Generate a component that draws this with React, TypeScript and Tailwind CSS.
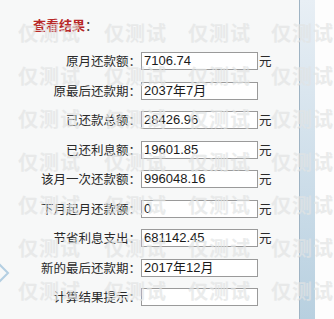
import React from "react";

const rows: { label: string; value: string; unit?: boolean }[] = [
  { label: "原月还款额：", value: "7106.74", unit: true },
  { label: "原最后还款期：", value: "2037年7月" },
  { label: "已还款总额：", value: "28426.96", unit: true },
  { label: "已还利息额：", value: "19601.85", unit: true },
  { label: "该月一次还款额：", value: "996048.16", unit: true },
  { label: "下月起月还款额：", value: "0", unit: true },
  { label: "节省利息支出：", value: "681142.45", unit: true },
  { label: "新的最后还款期：", value: "2017年12月" },
  { label: "计算结果提示：", value: "" },
];

const wmTops = [23, 66, 109, 152, 195, 238, 281];
const wmLefts = [18, 104, 188, 271];

export default function App() {
  return (
    <div
      className="relative w-[334px] h-[319px] overflow-hidden bg-white flex"
      style={{ fontFamily: '"Noto Sans CJK SC", "Liberation Sans", sans-serif' }}
    >
      <div className="w-[299px] h-full bg-[#f7f8f8] pt-[16px]">
        <div className="pl-[33px] h-[18px] leading-[18px] text-[13px] font-bold">
          <span className="text-[#b82828]">查看结果</span>
          <span className="text-[#444] font-normal">：</span>
        </div>
        <div className="mt-[12.5px] flex flex-col">
          {rows.map((r) => (
            <div key={r.label} className="flex items-center h-[29.5px]">
              <div className="w-[141px] text-right text-[12.5px] text-[#2a2a2a] leading-none">
                {r.label}
              </div>
              <div
                className="w-[117px] h-[18px] border border-[#9a9a9a] bg-white pl-[2px] text-[13px] leading-[16px] text-[#1a1a1a]"
                style={{ fontFamily: '"Liberation Sans", "Noto Sans CJK SC", sans-serif' }}
              >
                {r.value}
              </div>
              {r.unit && (
                <div className="ml-[1px] text-[12.5px] text-[#2a2a2a] leading-none">元</div>
              )}
            </div>
          ))}
        </div>
      </div>
      <div className="w-[16px] h-full border-l border-[#9fb4c4] bg-gradient-to-b from-[#e8eff5] to-[#b8d0e0]" />
      <div className="flex-1 h-full bg-[#fdfdfd]" />

      <svg className="absolute left-0 top-[262px]" width="12" height="22" viewBox="0 0 12 22">
        <polyline points="-2,1 8,11 -2,21" fill="none" stroke="#b4cfe2" strokeWidth="2" />
      </svg>

      {wmTops.map((t) =>
        wmLefts.map((l) => (
          <div
            key={`${t}-${l}`}
            className="absolute text-[20px] font-bold leading-[20px] tracking-[1px] text-[#e2e4e4] opacity-70 pointer-events-none whitespace-nowrap"
            style={{ top: t, left: l }}
          >
            仅测试
          </div>
        ))
      )}
    </div>
  );
}
